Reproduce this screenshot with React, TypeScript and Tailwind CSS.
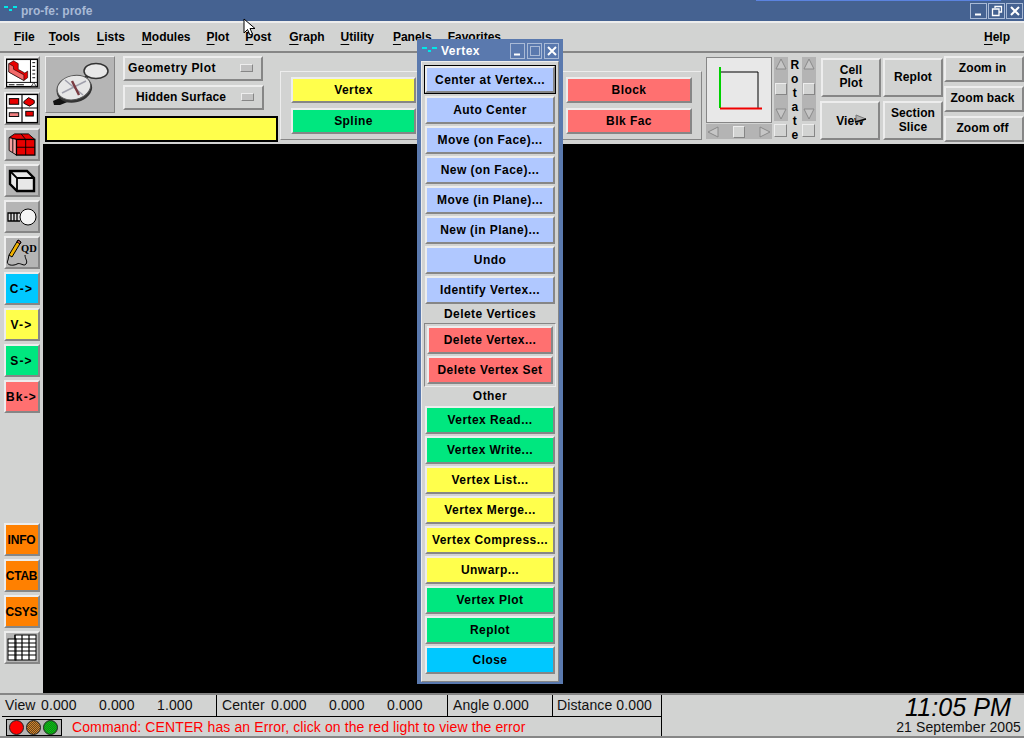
import type { ReactNode } from 'react';

const BEVEL = 'border-2 border-t-[#ededed] border-l-[#ededed] border-b-[#868686] border-r-[#868686]';
const LABEL = "font-['Liberation_Sans',sans-serif] font-bold text-[12px] tracking-[0.45px] text-black";
const TIGHT = 'tracking-[0.1px]!';

const MENU = ['File', 'Tools', 'Lists', 'Modules', 'Plot', 'Post', 'Graph', 'Utility', 'Panels', 'Favorites'];

// gaps between the menu entries are not quite even in the original
const MENU_LEFT: Record<string, string> = {
  File: 'ml-[14px]',
  Tools: 'ml-[14px]',
  Lists: 'ml-[17px]',
  Modules: 'ml-[17px]',
  Plot: 'ml-[16px]',
  Post: 'ml-[16px]',
  Graph: 'ml-[18px]',
  Utility: 'ml-[16px]',
  Panels: 'ml-[19px]',
  Favorites: 'ml-[16px]',
};

function MenuItem({ label }: { label: string }) {
  return (
    <span className={`${LABEL} tracking-[0px]! ${MENU_LEFT[label]}`}>
      <span className="underline underline-offset-[3px]">{label[0]}</span>
      {label.slice(1)}
    </span>
  );
}

function Btn({ className, children }: { className: string; children: ReactNode }) {
  return (
    <div className={`flex items-center justify-center text-center leading-[14px] ${BEVEL} ${LABEL} ${className}`}>
      {children}
    </div>
  );
}

function SideBtn({ className, children }: { className: string; children: ReactNode }) {
  return (
    <div className={`flex h-[33px] w-[36px] items-center justify-center ${BEVEL} ${className}`}>{children}</div>
  );
}

function SideText({ bg, wide, children }: { bg: string; wide?: boolean; children: ReactNode }) {
  return (
    <SideBtn className={bg}>
      <span
        className={`font-['Liberation_Sans',sans-serif] text-[12px] font-bold text-black ${wide ? 'tracking-[1.2px]' : 'tracking-[-0.2px]'}`}
      >
        {children}
      </span>
    </SideBtn>
  );
}

function Dropdown({ label, className }: { label: string; className: string }) {
  return (
    <div className={`flex h-[25px] items-center justify-between pb-[2px] pr-[8px] ${BEVEL} ${LABEL} ${className}`}>
      <span>{label}</span>
      <span className={`h-[8px] w-[13px] bg-[#c2c2c2] ${BEVEL} border-[1px]`} />
    </div>
  );
}

function VScroll() {
  return (
    <div className="flex w-[14px] flex-col">
      <div className="flex h-[64px] flex-col items-center justify-between bg-[#b4b4b4] py-[1px]">
        <svg width="12" height="12" viewBox="0 0 12 12">
          <path d="M6 1 L11 11 H1 Z" fill="#c6c6c6" stroke="#8a8a8a" />
        </svg>
        <div className={`h-[12px] w-[12px] bg-[#d2d3d2] ${BEVEL} border-[1px]`} />
        <svg width="12" height="12" viewBox="0 0 12 12">
          <path d="M6 11 L11 1 H1 Z" fill="#c6c6c6" stroke="#8a8a8a" />
        </svg>
      </div>
      <div className={`mt-[3px] h-[13px] w-[13px] bg-[#d2d3d2] ${BEVEL} border-[1px]`} />
    </div>
  );
}

function Cell({ className, children }: { className: string; children: ReactNode }) {
  return (
    <div className={`flex h-[21px] items-center border-r border-black ${className}`}>{children}</div>
  );
}

function Vals({ items, className }: { items: string[]; className: string }) {
  return (
    <>
      {items.map((v, i) => (
        <span key={i} className={className}>
          {v}
        </span>
      ))}
    </>
  );
}

function CompassIcon() {
  return (
    <svg width="64" height="46" viewBox="0 0 64 46">
      <path d="M41 13 L33 19" stroke="#333" strokeWidth="3" />
      <ellipse cx="48" cy="9" rx="12" ry="7.5" fill="#e8e8e8" stroke="#333" strokeWidth="1.5" />
      <path d="M14 35 L5 39 L6 43 L12 43 L22 39 Z" fill="#111" />
      <g transform="rotate(-14 26 26)">
        <ellipse cx="26" cy="27.5" rx="18" ry="13" fill="#333" />
        <ellipse cx="26" cy="25.5" rx="17" ry="12" fill="#e6e6e6" stroke="#555" />
      </g>
      <path d="M17 18 L35 33 M14 31 L38 19" stroke="#a0a0ac" strokeWidth="1.5" />
      <path d="M24 19 L31 33" stroke="#7a3a40" strokeWidth="2.4" />
    </svg>
  );
}

function BlockIcon() {
  return (
    <svg width="34" height="30" viewBox="0 0 34 30">
      <rect x="0.5" y="0.5" width="33" height="29" fill="#fff" stroke="#000" strokeWidth="1.5" />
      <path d="M3 5 L8 2 L13 5 V11 L20 15 L23 13 V20 L19 23 L3 14 Z" fill="#e80000" stroke="#000" strokeWidth="0.6" />
      <path d="M3 5 L3 14 L19 23 L19 17 L8 11 V8 Z" fill="#f26a6a" stroke="#000" strokeWidth="0.6" />
      <path d="M26 1 V25 M1 25 H33" stroke="#000" />
      <path d="M28 4 H31 M28 8 H31 M28 12 H31 M28 16 H31 M28 20 H31" stroke="#000" />
      <path d="M3 27.5 H9 M11 27.5 H19" stroke="#000" />
      <path d="M29.5 25 L27 29 H32 Z" fill="#fff" stroke="#000" strokeWidth="0.7" />
    </svg>
  );
}

function ViewsIcon() {
  return (
    <svg width="34" height="31" viewBox="0 0 34 31">
      <rect x="0.5" y="0.5" width="33" height="30" fill="#fff" stroke="#000" strokeWidth="1.5" />
      <path d="M17 1 V30 M1 15 H33" stroke="#000" strokeWidth="1.2" />
      <rect x="3.5" y="5" width="10" height="6" fill="#e80000" stroke="#000" />
      <path d="M19 8 L24 4 L30 7 V10 L25 13 L19 10 Z" fill="#e80000" stroke="#000" />
      <rect x="3.5" y="20" width="10" height="4" fill="#f08080" stroke="#000" />
      <rect x="21" y="18.5" width="8" height="5" fill="#e80000" stroke="#000" />
    </svg>
  );
}

function RedCubeIcon() {
  return (
    <svg width="28" height="23" viewBox="0 0 30 25">
      <path d="M1 5 L7 1 H22 L29 7 H9 Z" fill="#e80000" stroke="#000" />
      <path d="M1 5 L9 7 V24 L1 19 Z" fill="#f6a0a0" stroke="#000" />
      <rect x="9" y="7" width="20" height="17" fill="#e80000" stroke="#000" strokeWidth="1.4" />
      <path d="M19 7 V24 M9 15.5 H29 M5 6 V21 M14 1 L19 7" stroke="#000" />
    </svg>
  );
}

function WireCubeIcon() {
  return (
    <svg width="28" height="24" viewBox="0 0 28 24">
      <path d="M2 2 H19 L26 9 V22 H9 L2 15 Z" fill="#e8e8e8" stroke="#000" strokeWidth="2.4" />
      <path d="M2 2 L9 9 V22 M9 9 H26" fill="none" stroke="#000" strokeWidth="1.8" />
    </svg>
  );
}

function LightIcon() {
  return (
    <svg width="30" height="18" viewBox="0 0 30 18">
      <path d="M13 5 H1 V13 H13 M4 5 V13 M7 5 V13 M10 5 V13" fill="#ddd" stroke="#000" strokeWidth="1.3" />
      <circle cx="21" cy="9" r="8" fill="#f4f4f4" stroke="#000" />
    </svg>
  );
}

function PencilIcon() {
  return (
    <svg width="32" height="30" viewBox="0 0 32 30">
      <path d="M12 2 L15 4 L6 19 L3 17 Z" fill="#f0b000" stroke="#000" />
      <path d="M12 2 L15 4 L14 6 L11 4 Z" fill="#d06060" stroke="#000" />
      <path d="M3 17 L2 22 C-1 28 8 28 11 26 C14 24 18 29 20 26 C22 23 19 21 19 17" fill="none" stroke="#000" />
      <text x="15" y="14" fontFamily="'Liberation Serif',serif" fontWeight="bold" fontSize="10.5" letterSpacing="0">
        QD
      </text>
    </svg>
  );
}

function TableIcon() {
  return (
    <svg width="30" height="27" viewBox="0 0 30 27">
      <rect x="8" y="1" width="21" height="25" fill="#fff" stroke="#000" />
      <rect x="1" y="5" width="8" height="21" fill="#fff" stroke="#000" />
      <path d="M1 9 H29 M1 13 H29 M1 17 H29 M1 21 H29 M8 1 V26 M15 1 V26 M22 1 V26 M8 5 H29" stroke="#000" strokeWidth="1.2" />
    </svg>
  );
}

function TrafficLights() {
  return (
    <svg width="56" height="17" viewBox="0 0 56 17">
      <defs>
        <pattern id="dither-amber" width="2" height="2" patternUnits="userSpaceOnUse">
          <rect width="2" height="2" fill="#e08020" />
          <rect width="1" height="1" fill="#5a4a2a" />
          <rect x="1" y="1" width="1" height="1" fill="#5a4a2a" />
        </pattern>
        <pattern id="dither-green" width="2" height="2" patternUnits="userSpaceOnUse">
          <rect width="2" height="2" fill="#00e000" />
          <rect width="1" height="1" fill="#1a6a2a" />
          <rect x="1" y="1" width="1" height="1" fill="#1a6a2a" />
        </pattern>
      </defs>
      <rect x="0.5" y="0.5" width="55" height="16" fill="#b5b5b5" stroke="#000" />
      <circle cx="10.5" cy="8.5" r="7" fill="#ff0000" stroke="#222" />
      <circle cx="27.5" cy="8.5" r="7" fill="url(#dither-amber)" stroke="#222" />
      <circle cx="44.5" cy="8.5" r="7" fill="url(#dither-green)" stroke="#222" />
    </svg>
  );
}

function WinGlyph({ kind, className }: { kind: 'min' | 'max' | 'restore' | 'close'; className: string }) {
  return (
    <div className={`flex items-center justify-center border border-[#a9bad6] ${className}`}>
      <svg width="12" height="12" viewBox="0 0 12 12" stroke="#fff" fill="none">
        {kind === 'min' && <path d="M2 9.5 H8" strokeWidth="2" />}
        {kind === 'max' && <rect x="1.5" y="1.5" width="9" height="9" stroke="#a9bad6" />}
        {kind === 'restore' && <path d="M4 3 V1.5 H10.5 V7 H8 M1.5 4 H8 V10.5 H1.5 Z" strokeWidth="1.3" />}
        {kind === 'close' && <path d="M2 2 L10 10 M10 2 L2 10" strokeWidth="2" />}
      </svg>
    </div>
  );
}

const BLUE = 'bg-[#b0c8ff]';
const GREEN = 'bg-[#00e77f]';
const YELLOW = 'bg-[#ffff4c]';
const RED = 'bg-[#ff7070]';

const TOP_ROWS = ['Auto Center', 'Move (on Face)...', 'New (on Face)...', 'Move (in Plane)...', 'New (in Plane)...', 'Undo', 'Identify Vertex...'];

const OTHER_ROWS: [string, string][] = [
  ['Vertex Read...', GREEN],
  ['Vertex Write...', GREEN],
  ['Vertex List...', YELLOW],
  ['Vertex Merge...', YELLOW],
  ['Vertex Compress...', YELLOW],
  ['Unwarp...', YELLOW],
  ['Vertex Plot', GREEN],
  ['Replot', GREEN],
  ['Close', 'bg-[#00c8ff]'],
];

function VertexWindow() {
  return (
    <div className="absolute left-[417px] top-[39px] flex h-[645px] w-[146px] flex-col border-2 border-[#5a79ae] bg-[#5a79ae]">
      {/* Title bar */}
      <div className="flex h-[20px] shrink-0 items-center pl-[3px] pr-[2px]">
        <svg width="15" height="8" viewBox="0 0 15 8" className="mt-[-3px]">
          <path d="M0 2 H5 M6 5 H9 M10 2 H15" stroke="#00e8e8" strokeWidth="2" />
        </svg>
        <span className="ml-[4px] font-['Liberation_Sans',sans-serif] text-[12px] font-bold tracking-[0.5px] text-white">Vertex</span>
        <div className="ml-auto flex gap-[2px]">
          <WinGlyph kind="min" className="h-[16px] w-[15px]" />
          <WinGlyph kind="max" className="h-[16px] w-[15px]" />
          <WinGlyph kind="close" className="h-[16px] w-[15px]" />
        </div>
      </div>
      {/* Buttons */}
      <div className="mx-[2px] flex flex-1 flex-col items-center border border-t-[#ededed] border-l-[#ededed] border-b-[#868686] border-r-[#868686] bg-[#d2d3d2] pt-[3px]">
        <div className="mb-[2px] border border-black">
          <Btn className={`h-[27px] w-[130px] ${BLUE}`}>Center at Vertex...</Btn>
        </div>
        <div className="flex flex-col gap-[2px]">
          {TOP_ROWS.map((r) => (
            <Btn key={r} className={`h-[28px] w-[130px] ${BLUE}`}>
              {r}
            </Btn>
          ))}
        </div>
        <div className={`flex h-[19px] items-center ${LABEL}`}>Delete Vertices</div>
        <div className="flex h-[64px] w-[132px] flex-col items-center gap-[2px] border border-t-[#868686] border-l-[#868686] border-b-[#ededed] border-r-[#ededed] pt-[2px]">
          <Btn className={`h-[28px] w-[126px] ${RED}`}>Delete Vertex...</Btn>
          <Btn className={`h-[28px] w-[126px] ${RED}`}>Delete Vertex Set</Btn>
        </div>
        <div className={`flex h-[19px] items-center pb-[1px] ${LABEL}`}>Other</div>
        <div className="flex flex-col gap-[2px]">
          {OTHER_ROWS.map(([r, c]) => (
            <Btn key={r} className={`h-[28px] w-[130px] ${c}`}>
              {r}
            </Btn>
          ))}
        </div>
      </div>
    </div>
  );
}

export default function App() {
  return (
    <div className="relative flex h-[738px] w-[1024px] flex-col overflow-hidden bg-[#d2d3d2]">
      {/* Title bar */}
      <div className="flex h-[21px] shrink-0 items-center bg-[#456291] pl-[4px] pr-[1px]">
        <svg width="13" height="8" viewBox="0 0 13 8" className="mt-[-3px]">
          <path d="M0 2 H4 M5 5 H8 M9 2 H13" stroke="#00e8e8" strokeWidth="2" />
        </svg>
        <span className="ml-[4px] font-['Liberation_Sans',sans-serif] text-[12px] font-bold text-[#a9bad6]">
          pro-fe: profe
        </span>
        <div className="ml-auto flex gap-[1px]">
          <WinGlyph kind="min" className="h-[16px] w-[17px]" />
          <WinGlyph kind="restore" className="h-[16px] w-[17px]" />
          <WinGlyph kind="close" className="h-[16px] w-[17px]" />
        </div>
      </div>

      {/* Menu bar */}
      <div className="flex h-[32px] shrink-0 items-center border-y-2 border-t-[#ededed] border-b-[#868686]">
        {MENU.map((m) => (
          <MenuItem key={m} label={m} />
        ))}
        <span className={`ml-auto mr-[14px] ${LABEL} tracking-[0px]!`}>
          <span className="underline underline-offset-[3px]">H</span>elp
        </span>
      </div>

      <div className="flex min-h-0 flex-1">
        {/* Left tool column */}
        <div className="flex w-[43px] shrink-0 flex-col items-center gap-[3px] pt-[3px]">
          <SideBtn className="bg-[#b5b5b5]">
            <BlockIcon />
          </SideBtn>
          <SideBtn className="bg-[#b5b5b5]">
            <ViewsIcon />
          </SideBtn>
          <SideBtn className="bg-[#b5b5b5]">
            <RedCubeIcon />
          </SideBtn>
          <SideBtn className="bg-[#b5b5b5]">
            <WireCubeIcon />
          </SideBtn>
          <SideBtn className="bg-[#b5b5b5]">
            <LightIcon />
          </SideBtn>
          <SideBtn className="bg-[#b5b5b5]">
            <PencilIcon />
          </SideBtn>
          <SideText wide bg="bg-[#00c8ff]">C-&gt;</SideText>
          <SideText wide bg={YELLOW}>V-&gt;</SideText>
          <SideText wide bg={GREEN}>S-&gt;</SideText>
          <SideText wide bg={RED}>Bk-&gt;</SideText>
          <div className="h-[104px]" />
          <SideText bg="bg-[#ff8000]">INFO</SideText>
          <SideText bg="bg-[#ff8000]">CTAB</SideText>
          <SideText bg="bg-[#ff8000]">CSYS</SideText>
          <SideBtn className="bg-[#b5b5b5]">
            <TableIcon />
          </SideBtn>
        </div>

        <div className="flex min-w-0 flex-1 flex-col">
          {/* Toolbar */}
          <div className="flex h-[91px] shrink-0">
            <div className="ml-[2px] flex w-[233px] shrink-0 flex-col pt-[3px]">
              <div className="flex">
                <div className={`flex h-[57px] w-[70px] items-center justify-center bg-[#b5b5b5] ${BEVEL} border-[1px]`}>
                  <CompassIcon />
                </div>
                <div className="ml-[8px] flex flex-col gap-[4px]">
                  <Dropdown label="Geometry Plot" className="w-[140px] pl-[3px]" />
                  <Dropdown label="Hidden Surface" className="w-[141px] pl-[11px] tracking-[0.15px]!" />
                </div>
              </div>
              <div className="mt-[3px] h-[26px] border-2 border-black bg-[#ffff4c]" />
            </div>

            <div className="ml-[2px] mt-[18px] flex h-[69px] w-[422px] shrink-0 justify-between border border-t-[#ededed] border-l-[#ededed] border-b-[#868686] border-r-[#868686] pl-[10px] pr-[9px] pt-[5px]">
              <div className="flex flex-col gap-[5px]">
                <Btn className={`h-[26px] w-[125px] ${YELLOW}`}>Vertex</Btn>
                <Btn className={`h-[26px] w-[125px] ${GREEN}`}>Spline</Btn>
              </div>
              <div className="flex flex-col gap-[5px]">
                <Btn className={`h-[26px] w-[126px] ${RED}`}>Block</Btn>
                <Btn className={`h-[26px] w-[126px] ${RED}`}>Blk Fac</Btn>
              </div>
            </div>

            {/* Orientation preview */}
            <div className="ml-[4px] mt-[4px] flex w-[66px] shrink-0 flex-col">
              <div className="h-[66px] border border-[#868686] bg-[#e8e8e8]">
                <svg width="64" height="64" viewBox="0 0 64 64">
                  <path d="M13 14 H51 V50" fill="none" stroke="#000" />
                  <path d="M13 9 V50" stroke="#00d000" strokeWidth="2" />
                  <path d="M13 50.5 H55" stroke="#f00000" strokeWidth="2" />
                </svg>
              </div>
              <div className="mt-[1px] flex h-[15px] items-center justify-between bg-[#b4b4b4] px-[1px]">
                <svg width="12" height="12" viewBox="0 0 12 12">
                  <path d="M1 6 L11 1 V11 Z" fill="#c6c6c6" stroke="#8a8a8a" />
                </svg>
                <div className={`h-[12px] w-[12px] bg-[#d2d3d2] ${BEVEL} border-[1px]`} />
                <svg width="12" height="12" viewBox="0 0 12 12">
                  <path d="M11 6 L1 1 V11 Z" fill="#c6c6c6" stroke="#8a8a8a" />
                </svg>
              </div>
            </div>

            <div className="ml-[2px] mt-[4px] flex">
              <VScroll />
              <div className={`flex w-[14px] flex-col items-center pt-[1px] leading-[14px] ${LABEL}`}>
                {'Rotate'.split('').map((c, i) => (
                  <span key={i}>{c}</span>
                ))}
              </div>
              <VScroll />
            </div>

            <div className="ml-[5px] mt-[5px] flex flex-col gap-[4px]">
              <div className="flex gap-[2px]">
                <Btn className={`h-[39px] w-[60px] bg-[#d2d3d2] pb-[2px] leading-[13px]! ${TIGHT}`}>
                  Cell
                  <br />
                  Plot
                </Btn>
                <Btn className={`h-[39px] w-[60px] bg-[#d2d3d2] pb-[2px] ${TIGHT}`}>Replot</Btn>
              </div>
              <div className="-ml-[1px] flex gap-[3px]">
                <Btn className={`relative h-[39px] w-[60px] bg-[#d2d3d2] ${TIGHT}`}>
                  View
                  <svg width="12" height="10" viewBox="0 0 12 10" className="absolute left-[33px] top-[11px]">
                    <path d="M1 1 L11 5 L1 9 Z" fill="#b0b0b0" stroke="#777" />
                    <path d="M0 8 L11 5" stroke="#000" strokeWidth="1.3" />
                  </svg>
                </Btn>
                <Btn className={`h-[39px] w-[60px] bg-[#d2d3d2] pb-[1px] ${TIGHT}`}>
                  Section
                  <br />
                  Slice
                </Btn>
              </div>
            </div>

            <div className="ml-[1px] mt-[3px] flex flex-col gap-[4px]">
              <Btn className={`h-[26px] w-[80px] bg-[#d2d3d2] pb-[2px] pr-[3px] ${TIGHT}`}>Zoom in</Btn>
              <Btn className={`h-[26px] w-[80px] bg-[#d2d3d2] pb-[2px] pr-[3px] ${TIGHT}`}>Zoom back</Btn>
              <Btn className={`h-[26px] w-[80px] bg-[#d2d3d2] pb-[2px] pr-[3px] ${TIGHT}`}>Zoom off</Btn>
            </div>
          </div>

          {/* Graphics area */}
          <div className="flex-1 bg-black" />
        </div>
      </div>

      {/* Status bar */}
      <div className="flex h-[45px] shrink-0 border-y-2 border-t-[#868686] border-b-[#868686] pl-[2px] font-['Liberation_Sans',sans-serif] text-[14px] tracking-[0.11px] text-[#111]">
        <div className="flex w-[660px] shrink-0 flex-col border-r border-black">
          <div className="flex border-b border-black">
            <Cell className="w-[215px] pl-[3px]">
              <span className="w-[36px]">View</span>
              <Vals items={['0.000', '0.000', '1.000']} className="w-[58px]" />
            </Cell>
            <Cell className="w-[231px] pl-[5px]">
              <span className="w-[49px]">Center</span>
              <Vals items={['0.000', '0.000', '0.000']} className="w-[58px]" />
            </Cell>
            <Cell className="w-[105px] pl-[5px]">Angle 0.000</Cell>
            <div className="flex h-[21px] items-center pl-[4px]">Distance 0.000</div>
          </div>
          <div className="flex flex-1 items-center pl-[4px]">
            <TrafficLights />
            <span className="ml-[10px] text-[#ff0000]">Command: CENTER has an Error, click on the red light to view the error</span>
          </div>
        </div>
        <div className="flex flex-1 flex-col items-end pr-[3px]">
          <span className="mr-[10px] h-[24px] text-[25px] italic leading-[25px] text-black">11:05 PM</span>
          <span className="text-[14px] leading-[16px]">21 September 2005</span>
        </div>
      </div>

      <VertexWindow />

      {/* Stray window edge and mouse pointer */}
      <div className="absolute left-[756px] top-0 h-[1px] w-[245px] bg-[#5b83e0]" />
      <svg width="14" height="20" viewBox="0 0 14 20" className="absolute left-[243px] top-[18px]">
        <path d="M1 1 V15 L4.5 11.5 L7 17 L9.5 16 L7 10.5 H12 Z" fill="#fff" stroke="#000" />
      </svg>
    </div>
  );
}
